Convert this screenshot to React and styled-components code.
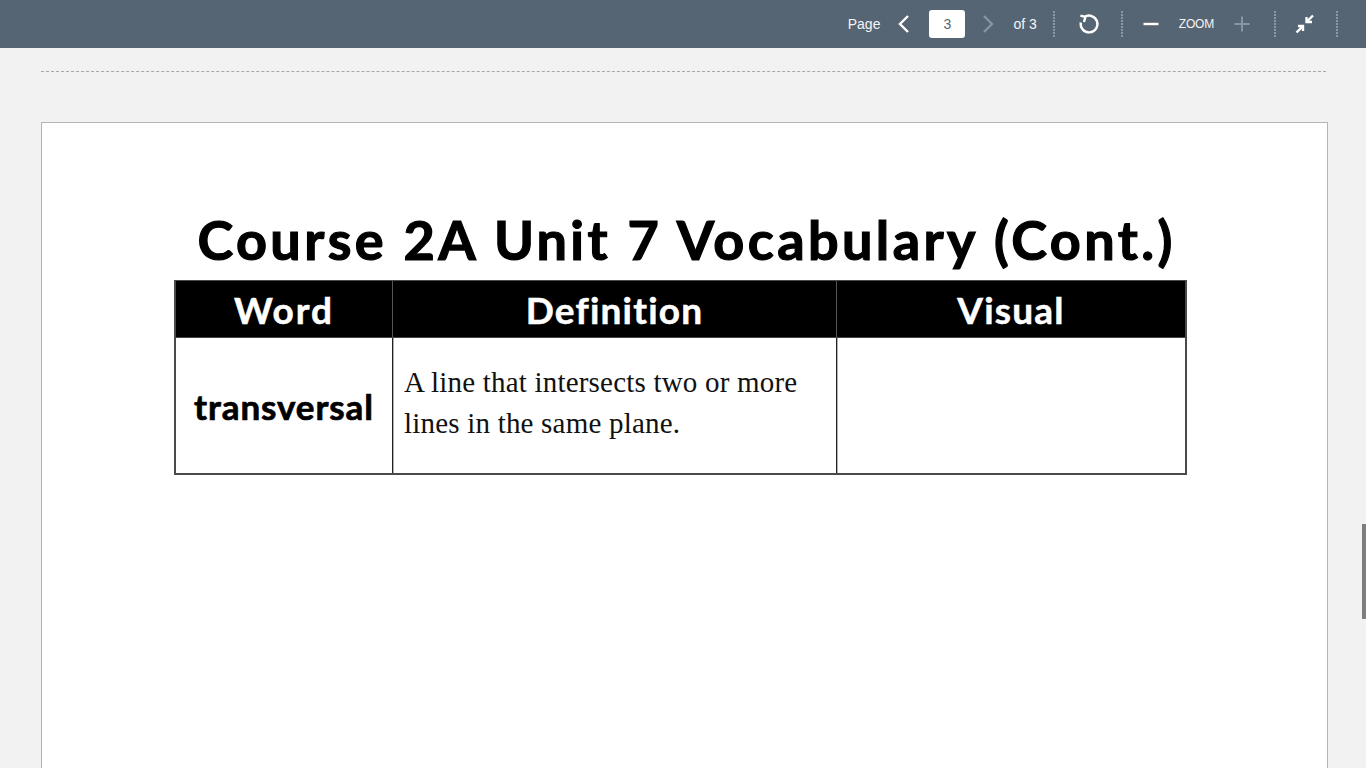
import React from "react";
import styled, { createGlobalStyle } from "styled-components";

const Global = createGlobalStyle`
  html, body { margin: 0; padding: 0; height: 768px; overflow: hidden; background: #f2f2f2; }
  * { box-sizing: border-box; }
`;
const Shell = styled.div`
  position: relative; width: 1366px; height: 768px; overflow: hidden; background: #f2f2f2;
  display: flex; flex-direction: column;
`;
const Toolbar = styled.header`
  flex: none; height: 48px; background: #566573; display: flex; align-items: center;
  justify-content: flex-end; padding-right: 28px; color: #fff;
  font-family: "Liberation Sans", Arial, sans-serif;
`;
const Label = styled.span`
  font-size: ${p => p.$size || 14}px; line-height: 1; white-space: nowrap; color: #f4f5f6;
  margin-left: ${p => p.$ml || 0}px; text-align: center;
  letter-spacing: ${p => p.$ls || 0}px;
`;
const IconBtn = styled.div`
  flex: none; width: ${p => p.$w || 24}px; height: 24px; margin-left: ${p => p.$ml || 0}px;
  display: flex; align-items: center; justify-content: center;
  color: ${p => p.$off ? "#8a96a1" : "#fff"};
`;
const PageInput = styled.div`
  flex: none; width: 36px; height: 28px; margin-left: 13px; background: #fff; border-radius: 3px;
  color: #566573; font-size: 14px; display: flex; align-items: center; justify-content: center;
`;
const Sep = styled.i`
  flex: none; width: 2px; height: 26px; margin-left: ${p => p.$ml}px;
  background: repeating-linear-gradient(to bottom, #8d98a3 0 2px, transparent 2px 3px);
`;
const Body = styled.main`
  flex: 1; min-height: 0; padding: 23px 38px 0 41px; overflow: hidden;
`;
const Rule = styled.div`
  height: 1px; width: 1285px; border-top: 1px dashed #a8a8a8;
`;
const Sheet = styled.section`
  margin-top: 50px; width: 1287px; height: 800px; background: #fff; border: 1px solid #b4b4b4;
  padding: 84px 0 0 132px;
`;
const Title = styled.h1`
  margin: 0 0 1px; width: 1013px; height: 72px; padding-left: 12px; text-align: center; color: #000;
  font-family: "Lato", "Open Sans", sans-serif; font-weight: 700; font-size: 54px; line-height: 66px;
  letter-spacing: 3.4px; white-space: nowrap; -webkit-text-stroke: 1.2px #000;
`;
const Table = styled.div`
  width: 1013px; height: 195px; border: 2px solid #4a4a4a; border-top-width: 1px;
  display: grid; grid-template-columns: 216px 444px 1fr; grid-template-rows: 57px 1fr;
`;
const Head = styled.div`
  background: #000; color: #fff; display: flex; align-items: center; justify-content: center;
  font-family: "Lato", "Open Sans", sans-serif; font-weight: 700; font-size: 37px;
  letter-spacing: ${p => p.$ls}px;
  -webkit-text-stroke: .5px #fff; padding-top: 1px; border-bottom: 1px solid #444;
  border-left: ${p => (p.$first ? "0" : "1px solid #555")};
`;
const Word = styled.div`
  display: flex; align-items: center; justify-content: center; color: #000; padding-top: 1px;
  font-family: "Lato", "Open Sans", sans-serif; font-weight: 700; font-size: 35px; letter-spacing: .9px;
  -webkit-text-stroke: .7px #000;
`;
const Def = styled.div`
  border-left: 1px solid #222; box-shadow: inset 1px 0 #b0b0b0; padding: 24px 10px 0 11px; color: #111;
  font-family: "Liberation Serif", "Times New Roman", serif; font-size: 29px; line-height: 41px;
  letter-spacing: .2px;
`;
const Visual = styled.div`
  border-left: 1px solid #222; box-shadow: inset 1px 0 #b0b0b0;
`;
const Thumb = styled.div`
  position: absolute; right: 0; top: 524px; width: 4px; height: 95px; background: #7e7e7e;
`;

const Icon = ({ size = 24, sw = 2, children }) => (
  <svg width={size} height={size} viewBox="0 0 24 24" fill="none" stroke="currentColor"
    strokeWidth={sw} strokeLinecap="butt" strokeLinejoin="miter">{children}</svg>
);

export default function App() {
  return (
    <Shell>
      <Global />
      <Toolbar>
        <Label>Page</Label>
        <IconBtn $ml={12}><Icon sw={2.4}><path d="M16 4 8 12l8 8" /></Icon></IconBtn>
        <PageInput>3</PageInput>
        <IconBtn $ml={11} $off><Icon sw={2.2}><path d="M8 4l8 8-8 8" /></Icon></IconBtn>
        <Label $ml={13}>of 3</Label>
        <Sep $ml={16} />
        <IconBtn $ml={22}><Icon sw={2.4}><path d="M7.4 5A8.4 8.4 0 1 1 3.8 10.5" /><path d="M3.4 3.6 8.4 4.8 7 10" /></Icon></IconBtn>
        <Sep $ml={20} />
        <IconBtn $ml={16}><Icon><path d="M4.5 12h15" strokeWidth="2.4" /></Icon></IconBtn>
        <Label $ml={16} $size={12} $ls={-0.2}>ZOOM</Label>
        <IconBtn $ml={16} $off><Icon><path d="M4.5 12h15M12 4.5v15" /></Icon></IconBtn>
        <Sep $ml={20} />
        <IconBtn $ml={17}><Icon sw={2.4}><path d="M20 3.5l-6 6M13.5 5v5H19M3.5 20.5l6-6M5 14h5v5" /></Icon></IconBtn>
        <Sep $ml={19} />
      </Toolbar>
      <Body>
        <Rule />
        <Sheet>
          <Title>Course 2A Unit 7 Vocabulary (Cont.)</Title>
          <Table>
            <Head $first $ls={2}>Word</Head>
            <Head $ls={1.2}>Definition</Head>
            <Head $ls={1.2}>Visual</Head>
            <Word>transversal</Word>
            <Def>A line that intersects two or more lines in the same plane.</Def>
            <Visual />
          </Table>
        </Sheet>
      </Body>
      <Thumb />
    </Shell>
  );
}
